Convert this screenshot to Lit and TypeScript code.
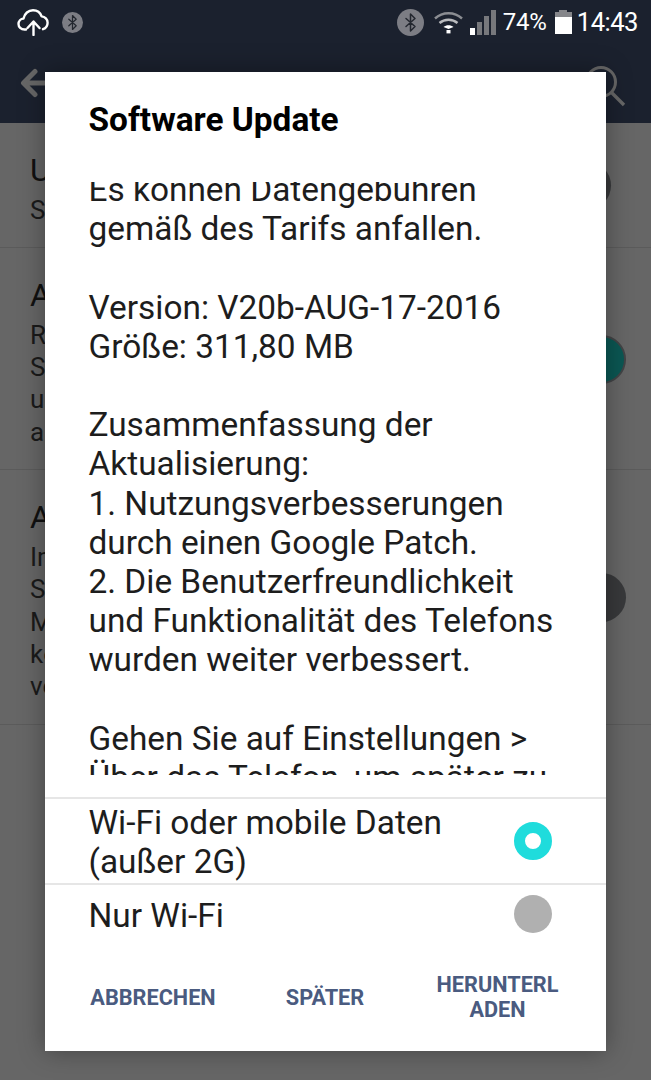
import { LitElement, html, css, svg } from 'lit'
import { customElement } from 'lit/decorators.js'

const btGlyph = svg`<path d="M-4.5 -4 L4.5 4 L0 8.5 V-8.5 L4.5 -4 L-4.5 4" fill="none" stroke="#23272f" stroke-width="1.5" stroke-linejoin="round" stroke-linecap="round"/>`

const paragraphs = [
  ['Es können Datengebühren', 'gemäß des Tarifs anfallen.'],
  ['Version: V20b-AUG-17-2016', 'Größe: 311,80 MB'],
  [
    'Zusammenfassung der',
    'Aktualisierung:',
    '1. Nutzungsverbesserungen',
    'durch einen Google Patch.',
    '2. Die Benutzerfreundlichkeit',
    'und Funktionalität des Telefons',
    'wurden weiter verbessert.',
  ],
  ['Gehen Sie auf Einstellungen >', 'Über das Telefon, um später zu'],
]

const settings = [
  { title: 'Updates', lines: ['Software'], toggle: 'small' },
  { title: 'Automatisch', lines: ['Regelmäßig', 'Software', 'und', 'automatisch'], toggle: 'on' },
  { title: 'Automatisch', lines: ['Im', 'Software', 'Mobil', 'kostet', 'verbunden'], toggle: 'off' },
]

@customElement('app-root')
export class AppRoot extends LitElement {
  render() {
    return html`
      <div class="status">
        <svg class="cloud" width="32" height="28" viewBox="0 0 32 28">
          <path d="M9 21.5H7.5C4 21.5 1.5 19 1.5 16c0-2.8 2.2-5.2 5-5.4C7.5 5.6 11.4 2.2 16 2.2c4 0 7.4 2.6 8.6 6.2 3.4.2 6 3 6 6.3 0 2.8-1.7 5.4-4.6 6.5" fill="none" stroke="#fff" stroke-width="2.4" stroke-linecap="round" stroke-linejoin="round"/>
          <path d="M16.5 27V14.5M10.5 20l6-6.5 6 6.5" fill="none" stroke="#fff" stroke-width="2.4" stroke-linecap="round" stroke-linejoin="round"/>
        </svg>
        <svg class="bt-left" width="21" height="21" viewBox="-10.5 -10.5 21 21">
          <circle r="10.5" fill="#7c7d84"/>
          <g transform="scale(.82)">${btGlyph}</g>
        </svg>
        <div class="spacer"></div>
        <svg class="bt-right" width="27" height="27" viewBox="-13.5 -13.5 27 27">
          <circle r="13.5" fill="#7c7d84"/>
          ${btGlyph}
        </svg>
        <svg class="wifi" width="31" height="24" viewBox="0 0 31 24">
          <path d="M2 8.5C9.5 1.5 21.5 1.5 29 8.5" fill="none" stroke="#8b8d92" stroke-width="2.4"/>
          <path d="M6.5 13c5-4.4 13-4.4 18 0" fill="none" stroke="#b9babd" stroke-width="2.4"/>
          <path d="M10.5 17c2.8-2.4 7.2-2.4 10 0l-5 2z" fill="#fff"/>
          <rect x="13.5" y="20" width="4" height="3.4" fill="#fff"/>
        </svg>
        <div class="signal">
          <span class="bar lit" style="height:7px"></span>
          <span class="bar" style="height:13px"></span>
          <span class="bar" style="height:19px"></span>
          <span class="bar" style="height:25px"></span>
        </div>
        <span class="pct">74%</span>
        <div class="battery"><span class="cap"></span><span class="empty"></span><span class="fill"></span></div>
        <span class="clock">14:43</span>
      </div>

      <div class="appbar">
        <svg width="30" height="36" viewBox="0 0 30 36">
          <path d="M28 18H4M15 6.5 3.5 18 15 29.5" fill="none" stroke="#676767" stroke-width="5" stroke-linecap="round" stroke-linejoin="round"/>
        </svg>
        <svg width="42" height="44" viewBox="0 0 42 44">
          <circle cx="17" cy="17" r="14.5" fill="none" stroke="#676767" stroke-width="3"/>
          <path d="M27.5 27.5 40 40" fill="none" stroke="#676767" stroke-width="3.4"/>
        </svg>
      </div>

      <div class="list">
        ${settings.map(
          (s) => html`
            <div class="row">
              <div class="row-text">
                <div class="row-title">${s.title}</div>
                ${s.lines.map((l) => html`<div class="row-line">${l}</div>`)}
              </div>
              <span class="toggle ${s.toggle}"></span>
            </div>
          `
        )}
      </div>

      <div class="dialog">
        <div class="title">Software Update</div>
        <div class="scroll">
          <div class="scroll-inner">
            ${paragraphs.map(
              (p) => html`<div class="para">${p.map((l) => html`<div>${l}</div>`)}</div>`
            )}
          </div>
        </div>
        <div class="option first">
          <div class="opt-label">Wi-Fi oder mobile Daten<br />(außer 2G)</div>
          <span class="radio checked"></span>
        </div>
        <div class="option second">
          <div class="opt-label">Nur Wi-Fi</div>
          <span class="radio"></span>
        </div>
        <div class="buttons">
          <div class="btn">ABBRECHEN</div>
          <div class="btn">SPÄTER</div>
          <div class="btn">HERUNTERL<br />ADEN</div>
        </div>
      </div>
    `
  }

  static styles = css`
    :host {
      display: block;
      position: relative;
      width: 651px;
      height: 1080px;
      overflow: hidden;
      background: #666666;
      font-family: Roboto, sans-serif;
    }
    .status {
      height: 44px;
      display: flex;
      align-items: center;
      padding: 0 13px 0 17px;
      background: #1b212e;
    }
    .cloud {
      margin-right: 13px;
    }
    .spacer {
      flex: 1;
    }
    .wifi {
      margin-left: 9px;
    }
    .signal {
      display: flex;
      align-items: flex-end;
      gap: 2.5px;
      height: 25px;
      margin-left: 6px;
      margin-top: 1px;
    }
    .bar {
      width: 4.5px;
      background: #77787c;
    }
    .bar.lit {
      background: #fff;
    }
    .pct {
      margin-left: 7px;
      color: #fff;
      font-size: 24px;
      letter-spacing: -0.2px;
    }
    .battery {
      display: flex;
      flex-direction: column;
      align-items: center;
      width: 17px;
      margin-left: 8px;
    }
    .cap {
      width: 8px;
      height: 2px;
      background: #85868a;
    }
    .empty {
      width: 17px;
      height: 5px;
      background: #85868a;
    }
    .fill {
      width: 17px;
      height: 17px;
      background: #fff;
    }
    .clock {
      margin-left: 5px;
      color: #fff;
      font-size: 25.6px;
      letter-spacing: -0.5px;
    }
    .appbar {
      height: 79px;
      display: flex;
      align-items: flex-start;
      justify-content: space-between;
      padding: 21px 25px 0 20px;
      box-sizing: border-box;
      background: #1b212e;
    }
    .row {
      display: flex;
      align-items: center;
      justify-content: space-between;
      padding: 22.5px 25px 21.5px 30px;
      border-bottom: 1px solid #5b5b5b;
    }
    .row-title {
      font-size: 32px;
      line-height: 48px;
      color: #111;
    }
    .row-line {
      font-size: 26px;
      line-height: 32.3px;
      color: #1a1a1a;
    }
    .toggle {
      width: 49px;
      height: 49px;
      border-radius: 50%;
      box-sizing: border-box;
    }
    .toggle.small {
      background: #38393b;
      margin-right: 15px;
    }
    .toggle.on {
      background: #0b5753;
      border: 2px solid #424446;
    }
    .toggle.off {
      background: #38393b;
    }
    .dialog {
      position: absolute;
      left: 45px;
      top: 72px;
      width: 561px;
      height: 979px;
      display: flex;
      flex-direction: column;
      background: #fff;
      color: #1d1d1d;
      box-shadow: 0 0 24px rgba(0, 0, 0, 0.35);
    }
    .title {
      height: 110px;
      box-sizing: border-box;
      padding: 26px 43.5px 0;
      font-size: 33.4px;
      line-height: 44px;
      font-weight: 700;
      color: #000;
    }
    .scroll {
      height: 593px;
      overflow: hidden;
      padding: 0 43.5px;
      font-size: 33.4px;
      line-height: 39.2px;
    }
    .scroll-inner {
      margin-top: -12px;
    }
    .para {
      margin-bottom: 39.2px;
    }
    .option {
      display: flex;
      align-items: center;
      justify-content: space-between;
      padding: 0 54px 0 43.5px;
      border-top: 2px solid #e6e6e6;
      box-sizing: border-box;
      font-size: 33.4px;
      line-height: 39.2px;
    }
    .option.first {
      margin-top: 22px;
      height: 86px;
    }
    .option.first .opt-label {
      padding-top: 2px;
    }
    .option.second {
      height: 60px;
    }
    .option.second .opt-label {
      padding-top: 4px;
    }
    .radio {
      width: 38px;
      height: 38px;
      border-radius: 50%;
      box-sizing: border-box;
      background: #b0b0b0;
    }
    .radio.checked {
      background: #fff;
      border: 11px solid #1fdcdc;
    }
    .buttons {
      flex: 1;
      display: grid;
      grid-template-columns: 216px 128px 1fr;
      align-items: center;
    }
    .btn {
      text-align: center;
      font-size: 21.7px;
      line-height: 25px;
      font-weight: 700;
      color: #4a5b80;
    }
  `
}
